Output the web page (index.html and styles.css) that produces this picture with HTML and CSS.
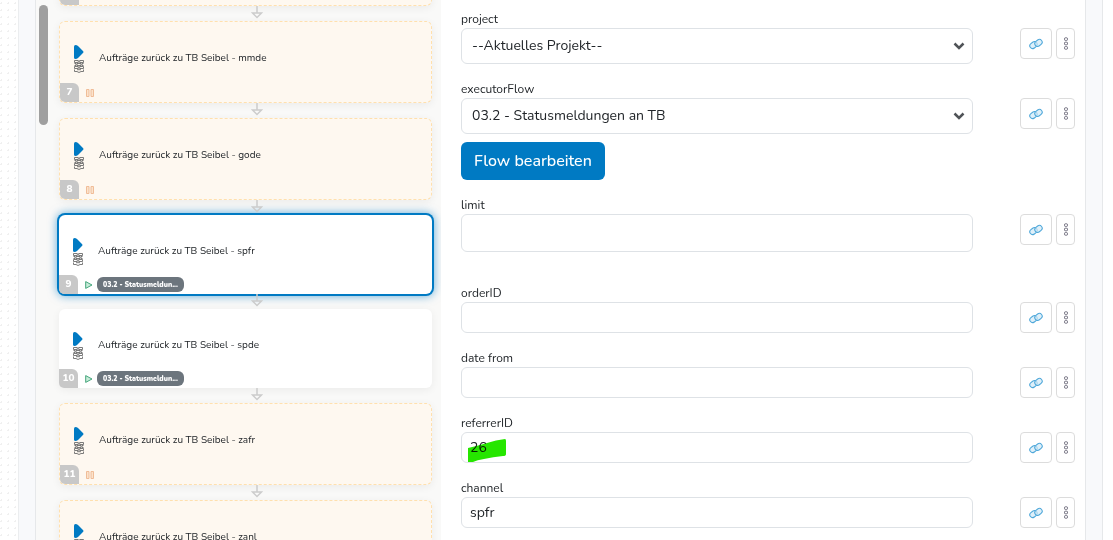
FILE: index.html
```html
<!DOCTYPE html>
<html lang="de">
<head>
  <meta charset="UTF-8" />
  <meta name="viewport" content="width=device-width, initial-scale=1" />
  <title>Flow</title>
  <link rel="stylesheet" href="styles.css">
</head>
<body>
  <!-- Shared icons -->
  <svg class="icon-defs" aria-hidden="true">
    <symbol id="icon-play" viewBox="0 0 10 14">
      <path d="M0 1.500Q0 0 1.500 0Q2.800 0 4 1L9.200 6.200Q9.800 7 9.200 7.800L4 13Q2.800 14 1.500 14Q0 14 0 12.500Z" fill="#007ac3"/>
    </symbol>
    <symbol id="icon-blocks" viewBox="0 0 10 13">
      <g fill="none" stroke="#6c6c6c" stroke-width=".9">
        <path d="M.5 .5H4.300V2.500H.5ZM5.700 .5H9.500V2.500H5.700Z"/>
        <path d="M.5 3.500H2V5.500H.5M3 3.500H7V5.500H3ZM9.500 3.500H8V5.500H9.500"/>
        <path d="M.5 6.500H4.300V8.500H.5ZM5.700 6.500H9.500V8.500H5.700Z"/>
        <path d="M.5 9.500V11.500H3L5 12.500L7 11.500H9.500V9.500M3 9.700H7"/>
      </g>
    </symbol>
    <symbol id="icon-pause" viewBox="0 0 8 8">
      <path d="M.5 .5H3V7.500H.5ZM5 .5H7.500V7.500H5Z" fill="#fbe3cc" stroke="#f0bd98"/>
    </symbol>
    <symbol id="icon-run" viewBox="0 0 8 8">
      <path d="M.7 .6L7 4L.7 7.400Z" fill="#c8ecd9" stroke="#45a67c"/>
    </symbol>
    <symbol id="icon-arrow" viewBox="0 0 12 13">
      <path d="M6 0V7M1.500 7H10.500L6 11.500Z" fill="none" stroke="#ccc" stroke-width="1.500"/>
    </symbol>
    <symbol id="icon-link" viewBox="0 0 14 12">
      <g fill="#d3eaf7" fill-opacity=".7" stroke="#4fa8da" stroke-width="1.100">
        <rect x=".6" y="4.300" width="7.800" height="5.600" rx="2.800" transform="rotate(-38 4.500 7.100)"/>
        <rect x="5.600" y="2.100" width="7.800" height="5.600" rx="2.800" transform="rotate(-38 9.500 4.900)"/>
      </g>
    </symbol>
    <symbol id="icon-dots" viewBox="0 0 4 13">
      <g fill="#fff" stroke="#6a6878" stroke-width="1">
        <rect x=".5" y=".8" width="3" height="2.600" rx=".9"/>
        <rect x=".5" y="5.200" width="3" height="2.600" rx=".9"/>
        <rect x=".5" y="9.600" width="3" height="2.600" rx=".9"/>
      </g>
    </symbol>
  </svg>

  <div class="app">
    <div class="canvas-left"></div>

    <main class="panel">
      <section class="flow">
        <div class="scroll-thumb"></div>
        <div class="flow-list">
          <article class="step paused">
            <div class="step-footer"><span class="step-number">&nbsp;</span></div>
          </article>
          <div class="connector"><svg><use href="#icon-arrow"/></svg></div>

          <article class="step paused">
            <div class="step-body">
              <div class="step-icons"><svg class="play"><use href="#icon-play"/></svg><svg class="blocks"><use href="#icon-blocks"/></svg></div>
              <span class="step-title">Aufträge zurück zu TB Seibel - mmde</span>
            </div>
            <div class="step-footer"><span class="step-number">7</span><svg class="state"><use href="#icon-pause"/></svg></div>
          </article>
          <div class="connector"><svg><use href="#icon-arrow"/></svg></div>

          <article class="step paused">
            <div class="step-body">
              <div class="step-icons"><svg class="play"><use href="#icon-play"/></svg><svg class="blocks"><use href="#icon-blocks"/></svg></div>
              <span class="step-title">Aufträge zurück zu TB Seibel - gode</span>
            </div>
            <div class="step-footer"><span class="step-number">8</span><svg class="state"><use href="#icon-pause"/></svg></div>
          </article>
          <div class="connector"><svg><use href="#icon-arrow"/></svg></div>

          <article class="step selected">
            <div class="step-body">
              <div class="step-icons"><svg class="play"><use href="#icon-play"/></svg><svg class="blocks"><use href="#icon-blocks"/></svg></div>
              <span class="step-title">Aufträge zurück zu TB Seibel - spfr</span>
            </div>
            <div class="step-footer"><span class="step-number">9</span><svg class="state"><use href="#icon-run"/></svg><span class="badge">03.2 - Statusmeldun...</span></div>
          </article>
          <div class="connector"><svg><use href="#icon-arrow"/></svg></div>

          <article class="step">
            <div class="step-body">
              <div class="step-icons"><svg class="play"><use href="#icon-play"/></svg><svg class="blocks"><use href="#icon-blocks"/></svg></div>
              <span class="step-title">Aufträge zurück zu TB Seibel - spde</span>
            </div>
            <div class="step-footer"><span class="step-number">10</span><svg class="state"><use href="#icon-run"/></svg><span class="badge">03.2 - Statusmeldun...</span></div>
          </article>
          <div class="connector"><svg><use href="#icon-arrow"/></svg></div>

          <article class="step paused">
            <div class="step-body">
              <div class="step-icons"><svg class="play"><use href="#icon-play"/></svg><svg class="blocks"><use href="#icon-blocks"/></svg></div>
              <span class="step-title">Aufträge zurück zu TB Seibel - zafr</span>
            </div>
            <div class="step-footer"><span class="step-number">11</span><svg class="state"><use href="#icon-pause"/></svg></div>
          </article>
          <div class="connector"><svg><use href="#icon-arrow"/></svg></div>

          <article class="step paused">
            <div class="step-body">
              <div class="step-icons"><svg class="play"><use href="#icon-play"/></svg><svg class="blocks"><use href="#icon-blocks"/></svg></div>
              <span class="step-title">Aufträge zurück zu TB Seibel - zanl</span>
            </div>
          </article>
        </div>
      </section>

      <form class="settings">
        <div class="field">
          <label for="project">project</label>
          <div class="select-wrap">
            <select id="project"><option>--Aktuelles Projekt--</option></select>
            <svg class="chevron" viewBox="0 0 12 8"><path d="M1.500 1.500L6 6L10.500 1.500" fill="none" stroke="#4f5357" stroke-width="2.500"/></svg>
          </div>
          <div class="actions">
            <button type="button" class="btn-icon" aria-label="Link"><svg class="link"><use href="#icon-link"/></svg></button>
            <button type="button" class="btn-icon btn-more" aria-label="Menü"><svg class="dots"><use href="#icon-dots"/></svg></button>
          </div>
        </div>

        <div class="field">
          <label for="executorFlow">executorFlow</label>
          <div class="select-wrap">
            <select id="executorFlow"><option>03.2 - Statusmeldungen an TB</option></select>
            <svg class="chevron" viewBox="0 0 12 8"><path d="M1.500 1.500L6 6L10.500 1.500" fill="none" stroke="#4f5357" stroke-width="2.500"/></svg>
          </div>
          <div class="actions">
            <button type="button" class="btn-icon" aria-label="Link"><svg class="link"><use href="#icon-link"/></svg></button>
            <button type="button" class="btn-icon btn-more" aria-label="Menü"><svg class="dots"><use href="#icon-dots"/></svg></button>
          </div>
          <button type="button" class="btn-main">Flow bearbeiten</button>
        </div>

        <div class="field field-limit">
          <label for="limit">limit</label>
          <input id="limit" type="text">
          <div class="actions">
            <button type="button" class="btn-icon" aria-label="Link"><svg class="link"><use href="#icon-link"/></svg></button>
            <button type="button" class="btn-icon btn-more" aria-label="Menü"><svg class="dots"><use href="#icon-dots"/></svg></button>
          </div>
        </div>

        <div class="field">
          <label for="orderID">orderID</label>
          <input id="orderID" type="text">
          <div class="actions">
            <button type="button" class="btn-icon" aria-label="Link"><svg class="link"><use href="#icon-link"/></svg></button>
            <button type="button" class="btn-icon btn-more" aria-label="Menü"><svg class="dots"><use href="#icon-dots"/></svg></button>
          </div>
        </div>

        <div class="field">
          <label for="dateFrom">date from</label>
          <input id="dateFrom" type="text">
          <div class="actions">
            <button type="button" class="btn-icon" aria-label="Link"><svg class="link"><use href="#icon-link"/></svg></button>
            <button type="button" class="btn-icon btn-more" aria-label="Menü"><svg class="dots"><use href="#icon-dots"/></svg></button>
          </div>
        </div>

        <div class="field">
          <label for="referrerID">referrerID</label>
          <div class="marked">
            <input id="referrerID" type="text" value="26">
            <svg class="marker" viewBox="0 0 38 24"><path d="M0 9Q9 7 19 4Q28 1 37 0Q38 0 38 2V15Q38 17 35 17Q25 18 16 20Q9 21 5 23H0Z" fill="#26e600"/></svg>
          </div>
          <div class="actions">
            <button type="button" class="btn-icon" aria-label="Link"><svg class="link"><use href="#icon-link"/></svg></button>
            <button type="button" class="btn-icon btn-more" aria-label="Menü"><svg class="dots"><use href="#icon-dots"/></svg></button>
          </div>
        </div>

        <div class="field">
          <label for="channel">channel</label>
          <input id="channel" type="text" value="spfr">
          <div class="actions">
            <button type="button" class="btn-icon" aria-label="Link"><svg class="link"><use href="#icon-link"/></svg></button>
            <button type="button" class="btn-icon btn-more" aria-label="Menü"><svg class="dots"><use href="#icon-dots"/></svg></button>
          </div>
        </div>
      </form>
    </main>

    <div class="canvas-right"></div>
  </div>
</body>
</html>
```

FILE: styles.css
```css
:root {
  --primary: #007ac3;
  --text: #212529;
  --border: #dee2e6;
  --gutter: #f8f9fb;
  --paused: #fef8f0;
  --paused-border: #ffe0ae;
}

* {
  margin: 0;
  padding: 0;
  box-sizing: border-box;
}

body {
  font-family: 'Nunito', 'Open Sans', sans-serif;
  font-size: 14px;
  color: var(--text);
  background: var(--gutter);
  overflow: hidden;
}

svg {
  display: block;
  flex: none;
}

.icon-defs {
  position: absolute;
  width: 0;
  height: 0;
}

.app {
  display: flex;
  height: 100vh;
}

/* Dotted canvas behind the dialog */
.canvas-left {
  width: 19px;
  border-right: 1px solid #ebedef;
  background: radial-gradient(circle, #f0f0f0 1px, #fff 1px) -2px 0 / 7px 7px;
}

.canvas-right {
  width: 11px;
  border-left: 1px solid #e6e8ea;
  background: #fff;
}

.panel {
  flex: 1;
  display: flex;
  margin: 0 16px;
  border: solid #e6e8ea;
  border-width: 0 1px;
  background: #fff;
  overflow: hidden;
}

/* Step list */
.flow {
  flex: 0 0 405px;
  display: flex;
  gap: 11px;
  padding: 0 9px 0 3px;
  background: #f9f9f8;
  overflow: hidden;
}

.scroll-thumb {
  width: 9px;
  height: 120px;
  margin-top: 5px;
  border-radius: 5px;
  background: #9f9f9f;
}

.flow-list {
  flex: 1;
  margin-top: -76px;
}

.step {
  display: flex;
  flex-direction: column;
  height: 79px;
  border-radius: 6px;
  background: #fff;
  box-shadow: 0 2px 8px rgba(0, 0, 0, 0.06);
}

.step.paused {
  height: 82px;
  border: 1px dashed var(--paused-border);
  background: var(--paused);
}

.step.selected {
  box-shadow: 0 0 0 2px var(--primary), 0 0 10px 2px rgba(0, 122, 195, 0.6);
}

.step-body {
  display: flex;
  align-items: flex-start;
  gap: 15px;
  padding: 23px 14px 0;
}

.step-icons {
  display: flex;
  flex-direction: column;
  gap: 1px;
}

.play {
  width: 10px;
  height: 14px;
}

.blocks {
  width: 10px;
  height: 13px;
}

.step-title {
  padding-top: 5px;
  font-size: 10px;
  line-height: 16px;
}

.step-footer {
  display: flex;
  align-items: center;
  margin-top: auto;
}

.step-number {
  width: 19px;
  margin-right: 7px;
  border-radius: 0 6px 0 5px;
  background: #c8c8c8;
  color: #fff;
  font-size: 10px;
  font-weight: 800;
  line-height: 19px;
  text-align: center;
}

.state {
  width: 8px;
  height: 8px;
}

.badge {
  margin-left: 4px;
  padding: 0 6px;
  border-radius: 6px;
  background: #6c757d;
  color: #fff;
  font-size: 7px;
  font-weight: 900;
  line-height: 15px;
}

.connector {
  display: flex;
  justify-content: center;
  height: 15px;
  padding-left: 22px;
}

.connector svg {
  width: 12px;
  height: 13px;
}

/* Settings form */
.settings {
  flex: 1;
  display: flex;
  flex-direction: column;
  gap: 16px;
  padding: 10px 10px 0 20px;
}

.field {
  display: grid;
  grid-template-columns: 1fr auto;
  column-gap: 47px;
}

.field label {
  grid-column: 1 / -1;
  font-size: 12px;
  line-height: 18px;
}

.field-limit {
  margin-bottom: 16px;
}

input,
select {
  display: block;
  width: 100%;
  border: 1px solid var(--border);
  border-radius: 6px;
  background: #fff;
  color: var(--text);
  font: inherit;
}

input {
  height: 31px;
  padding: 0 8px;
}

.field-limit input {
  height: 38px;
}

select {
  height: 36px;
  padding: 0 10px 2px;
  appearance: none;
}

.select-wrap,
.marked {
  position: relative;
}

.chevron {
  position: absolute;
  top: 14px;
  right: 8px;
  width: 12px;
  height: 8px;
  pointer-events: none;
}

/* Highlighter stroke over the value */
.marker {
  position: absolute;
  top: 7px;
  left: 7px;
  width: 38px;
  height: 24px;
  mix-blend-mode: multiply;
  pointer-events: none;
}

.actions {
  display: flex;
  align-items: flex-start;
  gap: 4px;
}

.btn-icon {
  display: flex;
  align-items: center;
  justify-content: center;
  width: 32px;
  height: 31px;
  border: 1px solid #dcdcdc;
  border-radius: 4px;
  background: #fff;
}

.btn-more {
  width: 19px;
}

.link {
  width: 14px;
  height: 12px;
}

.dots {
  width: 4px;
  height: 13px;
}

.btn-main {
  justify-self: start;
  height: 38px;
  margin-top: 8px;
  padding: 0 13px;
  border: 0;
  border-radius: 6px;
  background: var(--primary);
  color: #fff;
  font: inherit;
  font-size: 16px;
  font-weight: 500;
}
```
